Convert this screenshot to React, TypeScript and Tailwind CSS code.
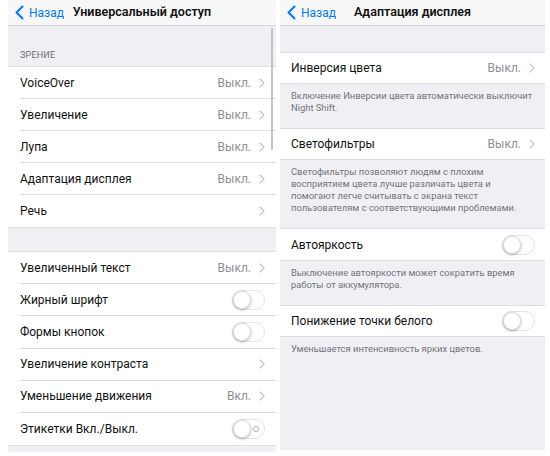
import React from "react";

const Chevron = () => (
  <svg width="6" height="10" viewBox="0 0 6 10" className="ml-[8px] shrink-0">
    <polyline points="1,1 5,5 1,9" fill="none" stroke="#c7c7cc" strokeWidth="1.3" strokeLinecap="round" strokeLinejoin="round" />
  </svg>
);

const NavBack = () => (
  <div className="flex items-center text-[#007aff]">
    <svg width="9" height="15" viewBox="0 0 9 15" className="mr-[5px]">
      <polyline points="7.5,1.5 1.5,7.5 7.5,13.5" fill="none" stroke="#007aff" strokeWidth="2" strokeLinecap="round" strokeLinejoin="round" />
    </svg>
    <span className="text-[12px]">Назад</span>
  </div>
);

const Toggle = ({ label = false }: { label?: boolean }) => (
  <div className="relative w-[33px] h-[20px] rounded-full border border-[#e3e3e6] bg-white shrink-0">
    <div className="absolute left-[0px] top-[0px] w-[18px] h-[18px] rounded-full bg-white shadow-[0_1px_3px_rgba(0,0,0,0.3)] border border-[#dcdcdc]" />
    {label && (
      <div className="absolute right-[5px] top-[6px] w-[6px] h-[6px] rounded-full border border-[#b0b0b4]" />
    )}
  </div>
);

type Row = { title: string; value?: string; chevron?: boolean; toggle?: boolean; label?: boolean };

const LeftRow = ({ r, last, h }: { r: Row; last: boolean; h: string }) => (
  <div className={`flex items-center pl-[12px] bg-white ${h}`}>
    <div className={`flex-1 h-full flex items-center pr-[11px] ${last ? "" : "border-b border-[#dedee2]"}`}>
      <span className="flex-1 text-[12px] text-[#111]">{r.title}</span>
      {r.value && <span className="text-[12px] text-[#8e8e93]">{r.value}</span>}
      {r.chevron && <Chevron />}
      {r.toggle && <Toggle label={r.label} />}
    </div>
  </div>
);

const group1: Row[] = [
  { title: "VoiceOver", value: "Выкл.", chevron: true },
  { title: "Увеличение", value: "Выкл.", chevron: true },
  { title: "Лупа", value: "Выкл.", chevron: true },
  { title: "Адаптация дисплея", value: "Выкл.", chevron: true },
  { title: "Речь", chevron: true },
];

const group2: Row[] = [
  { title: "Увеличенный текст", value: "Выкл.", chevron: true },
  { title: "Жирный шрифт", toggle: true },
  { title: "Формы кнопок", toggle: true },
  { title: "Увеличение контраста", chevron: true },
  { title: "Уменьшение движения", value: "Вкл.", chevron: true },
  { title: "Этикетки Вкл./Выкл.", toggle: true, label: true },
];

const RightRow = ({ r, h }: { r: Row; h: string }) => (
  <div className={`flex items-center pl-[11px] pr-[10px] bg-white border-y border-[#dedee2] ${h}`}>
    <span className="flex-1 text-[12px] text-[#111]">{r.title}</span>
    {r.value && <span className="text-[12px] text-[#8e8e93]">{r.value}</span>}
    {r.chevron && <Chevron />}
    {r.toggle && <Toggle />}
  </div>
);

const Footer = ({ children }: { children: React.ReactNode }) => (
  <div className="px-[11px] pt-[6px] pb-[14px] text-[9.4px] leading-[12px] text-[#747479] whitespace-nowrap">{children}</div>
);

export default function App() {
  return (
    <div
      className="w-[550px] h-[456px] bg-white flex pl-[8px] gap-[4px] overflow-hidden"
      style={{ fontFamily: "Roboto, 'Noto Sans', sans-serif" }}
    >
      {/* Left panel */}
      <div className="relative w-[268px] h-[452px] bg-[#efeff4] flex flex-col">
        <div className="h-[26px] bg-[#f7f7f7] border-b border-[#d6d6da] flex items-center pl-[7px] relative">
          <NavBack />
          <span className="absolute left-0 right-0 text-center text-[12.5px] font-semibold text-[#111] pointer-events-none">
            Универсальный доступ
          </span>
        </div>
        <div className="h-[40px] flex items-end pl-[12px] pb-[4px] text-[9px] text-[#6d6d72] tracking-[0.2px]">ЗРЕНИЕ</div>
        <div className="border-y border-[#dedee2]">
          {group1.map((r, i) => (
            <LeftRow key={r.title} r={r} last={i === group1.length - 1} h="h-[32px]" />
          ))}
        </div>
        <div className="h-[23px]" />
        <div className="border-y border-[#dedee2]">
          {group2.map((r, i) => (
            <LeftRow key={r.title} r={r} last={i === group2.length - 1} h="h-[32.2px]" />
          ))}
        </div>
        <div className="absolute right-[3px] top-[28px] w-[2px] h-[122px] rounded-full bg-[#c4c4c8]" />
      </div>

      {/* Right panel */}
      <div className="w-[265px] h-[450px] bg-[#efeff4] flex flex-col">
        <div className="h-[26px] bg-[#f7f7f7] border-b border-[#d6d6da] flex items-center pl-[7px] relative">
          <NavBack />
          <span className="absolute left-0 right-0 text-center text-[12.5px] font-semibold text-[#111] pointer-events-none">
            Адаптация дисплея
          </span>
        </div>
        <div className="h-[26px]" />
        <RightRow r={{ title: "Инверсия цвета", value: "Выкл.", chevron: true }} h="h-[32px]" />
        <Footer>
          Включение Инверсии цвета автоматически выключит
          <br />
          Night Shift.
        </Footer>
        <RightRow r={{ title: "Светофильтры", value: "Выкл.", chevron: true }} h="h-[32px]" />
        <Footer>
          Светофильтры позволяют людям с плохим
          <br />
          восприятием цвета лучше различать цвета и
          <br />
          помогают легче считывать с экрана текст
          <br />
          пользователям с соответствующими проблемами.
        </Footer>
        <RightRow r={{ title: "Автояркость", toggle: true }} h="h-[33px]" />
        <Footer>
          Выключение автояркости может сократить время
          <br />
          работы от аккумулятора.
        </Footer>
        <RightRow r={{ title: "Понижение точки белого", toggle: true }} h="h-[32px]" />
        <Footer>Уменьшается интенсивность ярких цветов.</Footer>
      </div>
    </div>
  );
}
